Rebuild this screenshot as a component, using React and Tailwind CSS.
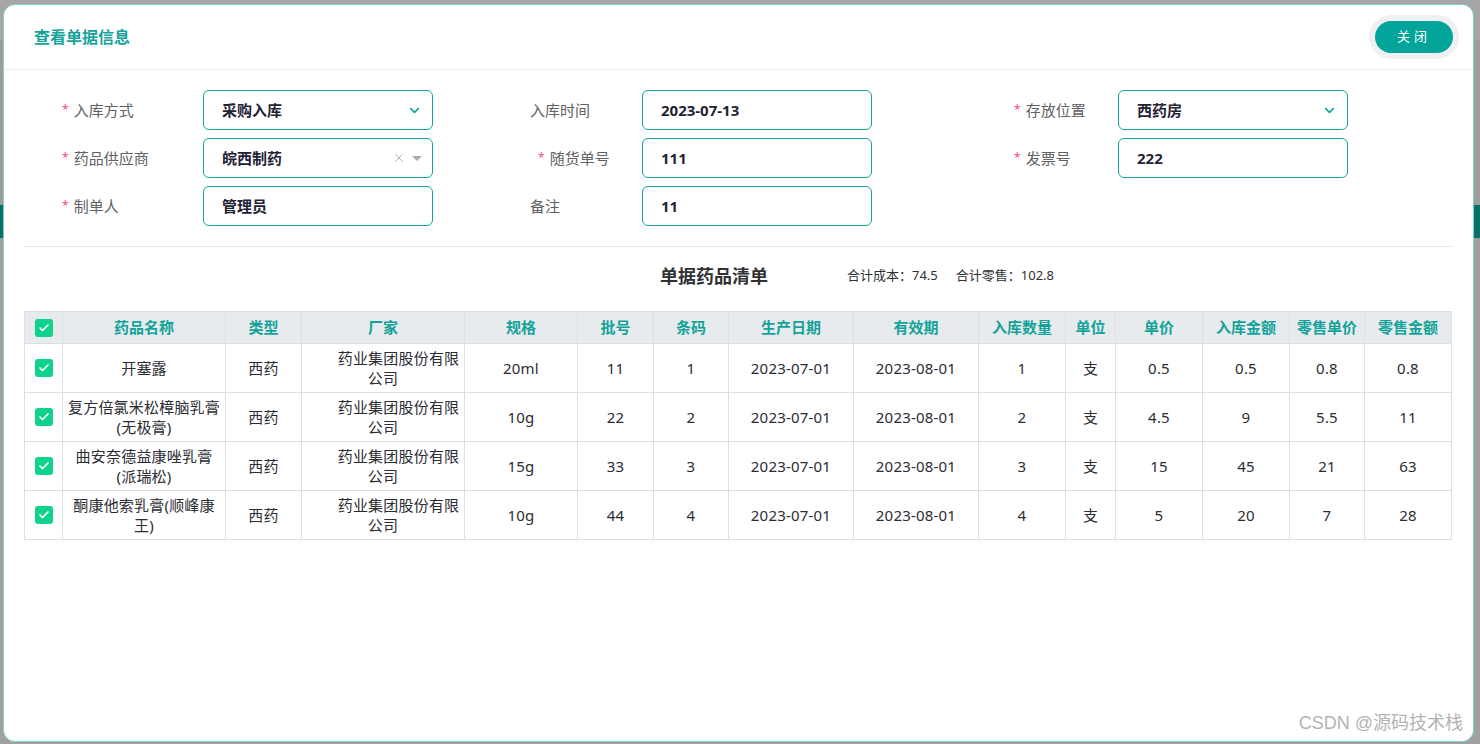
import { ChevronDown, Check, X } from 'lucide-react'

const FONT = { fontFamily: '"Noto Sans", "Noto Sans CJK SC", sans-serif' }

const COLS = [38, 163, 76, 163, 113, 76, 75, 125, 125, 87, 50, 87, 87, 75, 87]
const HEADERS = ['药品名称', '类型', '厂家', '规格', '批号', '条码', '生产日期', '有效期', '入库数量', '单位', '单价', '入库金额', '零售单价', '零售金额']

const ROWS = [
  { name: ['开塞露'], spec: '20ml', batch: '11', code: '1', qty: '1', price: '0.5', amount: '0.5', retail: '0.8', retailAmount: '0.8' },
  { name: ['复方倍氯米松樟脑乳膏', '(无极膏)'], spec: '10g', batch: '22', code: '2', qty: '2', price: '4.5', amount: '9', retail: '5.5', retailAmount: '11' },
  { name: ['曲安奈德益康唑乳膏', '(派瑞松)'], spec: '15g', batch: '33', code: '3', qty: '3', price: '15', amount: '45', retail: '21', retailAmount: '63' },
  { name: ['酮康他索乳膏(顺峰康', '王)'], spec: '10g', batch: '44', code: '4', qty: '4', price: '5', amount: '20', retail: '7', retailAmount: '28' },
]

function Box() {
  return (
    <span className="mx-auto flex h-[18px] w-[18px] items-center justify-center rounded-[3px] bg-[#0fd28c]">
      <Check size={12} strokeWidth={3.5} color="#fff" />
    </span>
  )
}

function Label({ text, required, className }) {
  return (
    <div className={`flex items-center text-[15px] text-[#606266] ${className}`}>
      {required && <span className="mr-[5px] text-[12px] text-[#ee4f86]">*</span>}
      {text}
    </div>
  )
}

function Field({ value, kind }) {
  return (
    <div className="flex h-[40px] w-[230px] items-center rounded-[6px] border border-[#14a39a] pl-[18px] pr-[10px]">
      <span className="flex-1 text-[15px] font-bold text-[#1f2335]">{value}</span>
      {kind === 'select' && <ChevronDown size={15} strokeWidth={2.6} color="#14a39a" />}
      {kind === 'clear' && (
        <div className="flex items-center gap-[6px]">
          <X size={14} strokeWidth={1.6} color="#a8abb2" />
          <span className="h-0 w-0 border-x-[5px] border-t-[5px] border-x-transparent border-t-[#a8abb2]" />
        </div>
      )}
    </div>
  )
}

export default function App() {
  return (
    <div className="relative h-[744px] w-[1480px] overflow-hidden bg-[#a2a2a2]" style={FONT}>
      {/* page behind the overlay */}
      <div className="h-[40px] bg-[#a6a6a6]" />
      <div className="h-[165px] bg-[#9c9c9c]" />
      <div className="h-[33px] bg-[#0b6f69]" />
      <div className="h-[506px] bg-[#a0a0a0]" />

      {/* dialog */}
      <div className="absolute left-[3px] top-[4px] flex h-[738px] w-[1471px] flex-col rounded-[12px] border border-[#79d4ca] bg-white">
        <div className="flex h-[65px] items-center justify-between border-b border-[#eceef2] pl-[30px] pr-[14px]">
          <h1 className="text-[16px] font-bold text-[#14a39a]">查看单据信息</h1>
          <div className="rounded-full bg-[#eef0f3] p-[6px]">
            <button className="h-[32px] w-[78px] rounded-full bg-[#03a59b] text-[13px] tracking-[4px] text-white">关闭</button>
          </div>
        </div>

        <div className="px-[20px] pt-[20px]">
          <div className="flex flex-col gap-[8px]">
            <div className="flex items-center">
              <Label text="入库方式" required className="w-[179px] pl-[38px]" />
              <Field value="采购入库" kind="select" />
              <Label text="入库时间" className="ml-[97px] w-[112px]" />
              <Field value="2023-07-13" />
              <Label text="存放位置" required className="ml-[142px] w-[104px]" />
              <Field value="西药房" kind="select" />
            </div>
            <div className="flex items-center">
              <Label text="药品供应商" required className="w-[179px] pl-[38px]" />
              <Field value="皖西制药" kind="clear" />
              <Label text="随货单号" required className="ml-[97px] w-[112px] pl-[8px]" />
              <Field value="111" />
              <Label text="发票号" required className="ml-[142px] w-[104px]" />
              <Field value="222" />
            </div>
            <div className="flex items-center">
              <Label text="制单人" required className="w-[179px] pl-[38px]" />
              <Field value="管理员" />
              <Label text="备注" className="ml-[97px] w-[112px]" />
              <Field value="11" />
            </div>
          </div>

          <div className="mt-[20px] border-t border-[#e5e7eb]" />

          <div className="flex h-[64px] items-center pb-[6px]">
            <h2 className="ml-[636px] text-[18px] font-bold text-[#303133]">单据药品清单</h2>
            <span className="ml-[79px] text-[13px] text-[#303133]">合计成本：74.5</span>
            <span className="ml-[18px] text-[13px] text-[#303133]">合计零售：102.8</span>
          </div>

          <table className="w-[1427px] table-fixed border-collapse text-center">
            <colgroup>
              {COLS.map((w, i) => (
                <col key={i} style={{ width: w }} />
              ))}
            </colgroup>
            <thead>
              <tr className="h-[32px] bg-[#e8ebee]">
                <th className="border border-[#dcdfe6]"><Box /></th>
                {HEADERS.map(h => (
                  <th key={h} className="border border-[#dcdfe6] text-[15px] font-bold text-[#14a39a]">{h}</th>
                ))}
              </tr>
            </thead>
            <tbody className="text-[15px] leading-[20px] tracking-[0.2px] text-[#2b2d33]">
              {ROWS.map((r, i) => (
                <tr key={i} className="h-[49px]">
                  <td className="border border-[#dcdfe6]"><Box /></td>
                  <td className="border border-[#dcdfe6]">
                    {r.name.map((l, j) => <div key={j}>{l}</div>)}
                  </td>
                  <td className="border border-[#dcdfe6]">西药</td>
                  <td className="border border-[#dcdfe6]">
                    <div className="pl-[31px]">药业集团股份有限</div>
                    <div>公司</div>
                  </td>
                  <td className="border border-[#dcdfe6]">{r.spec}</td>
                  <td className="border border-[#dcdfe6]">{r.batch}</td>
                  <td className="border border-[#dcdfe6]">{r.code}</td>
                  <td className="border border-[#dcdfe6]">2023-07-01</td>
                  <td className="border border-[#dcdfe6]">2023-08-01</td>
                  <td className="border border-[#dcdfe6]">{r.qty}</td>
                  <td className="border border-[#dcdfe6]">支</td>
                  <td className="border border-[#dcdfe6]">{r.price}</td>
                  <td className="border border-[#dcdfe6]">{r.amount}</td>
                  <td className="border border-[#dcdfe6]">{r.retail}</td>
                  <td className="border border-[#dcdfe6]">{r.retailAmount}</td>
                </tr>
              ))}
            </tbody>
          </table>
        </div>

        <div className="mt-auto flex justify-end pb-[4px] pr-[10px]">
          <span className="text-[18px] text-[#b3b3b3]" style={{ fontFamily: '"Liberation Sans", "Noto Sans CJK SC", sans-serif' }}>CSDN @源码技术栈</span>
        </div>
      </div>
    </div>
  )
}
